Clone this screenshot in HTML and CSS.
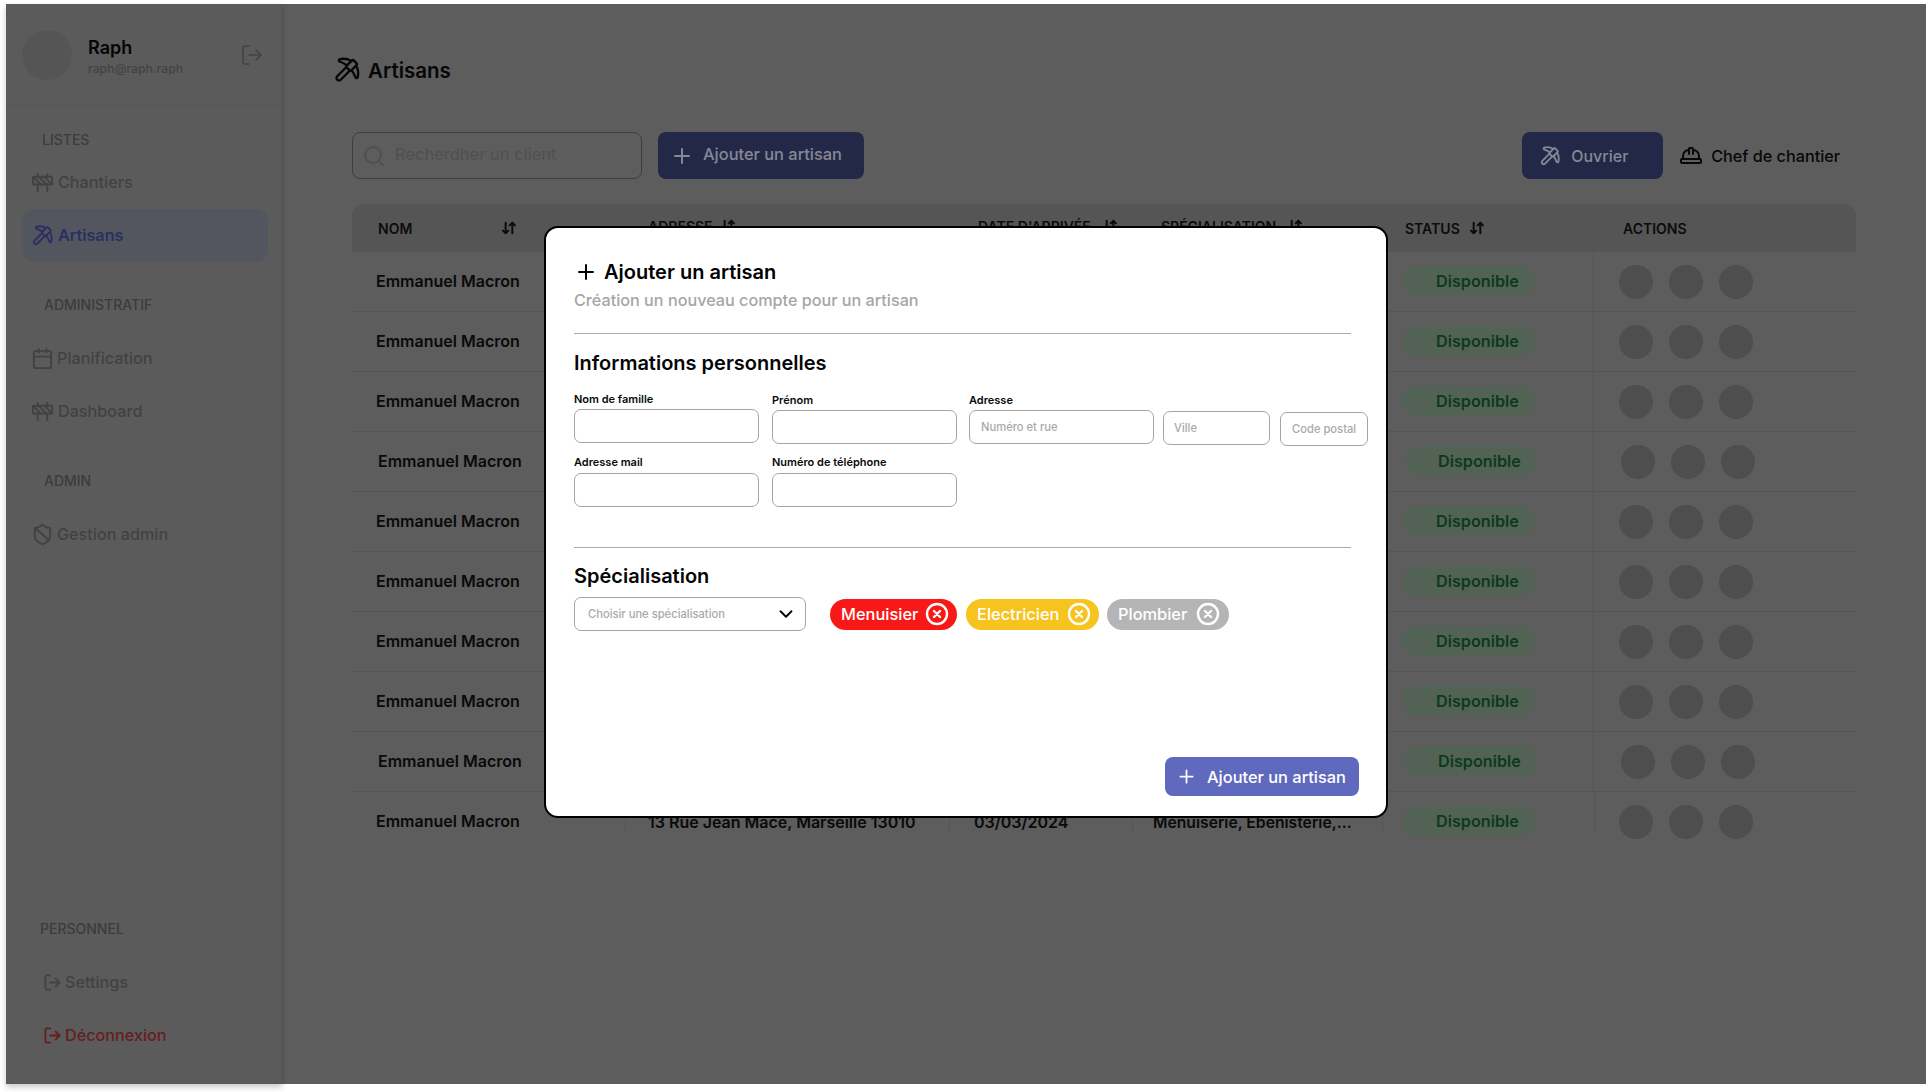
FILE: index.html
```html
<!DOCTYPE html>
<html lang="fr">

<head>
    <meta charset="UTF-8">
    <title>Artisans</title>
    <link rel="stylesheet" href="styles.css">
</head>

<body>
    <svg class="sprite" xmlns="http://www.w3.org/2000/svg">
        <symbol id="i-pick" viewBox="0 0 24 24">
            <path d="M14.531 12.469 6.619 20.38a1 1 0 1 1-3-3l7.912-7.912"></path>
            <path d="M15.686 4.314A12.5 12.5 0 0 0 5.461 2.958 1 1 0 0 0 5.58 4.71a22 22 0 0 1 6.318 3.393"></path>
            <path d="M17.7 3.7a1 1 0 0 0-1.4 0l-4.6 4.6a1 1 0 0 0 0 1.4l2.6 2.6a1 1 0 0 0 1.4 0l4.6-4.6a1 1 0 0 0 0-1.4z"></path>
            <path d="M19.686 8.314a12.501 12.501 0 0 1 1.356 10.225 1 1 0 0 1-1.751-.119 22 22 0 0 0-3.393-6.319"></path>
        </symbol>
        <symbol id="i-barrier" viewBox="0 0 24 24">
            <rect x="2" y="6" width="20" height="8" rx="1"></rect>
            <path d="M17 14v7M7 14v7M17 3v3M7 3v3M10 14 2.3 6.3M14 6l7.7 7.7M8 6l8 8"></path>
        </symbol>
        <symbol id="i-calendar" viewBox="0 0 24 24">
            <path d="M8 2v4M16 2v4M3 10h18"></path>
            <rect x="3" y="4" width="18" height="18" rx="2"></rect>
        </symbol>
        <symbol id="i-shield" viewBox="0 0 24 24">
            <path d="M20 13c0 5-3.5 7.5-7.66 8.95a1 1 0 0 1-.67-.01C7.5 20.5 4 18 4 13V6a1 1 0 0 1 1-1c2 0 4.5-1.2 6.24-2.72a1.17 1.17 0 0 1 1.52 0C14.51 3.81 17 5 19 5a1 1 0 0 1 1 1z"></path>
            <path d="m4.243 5.21 14.39 12.472"></path>
        </symbol>
        <symbol id="i-logout" viewBox="0 0 24 24">
            <path d="M9 21H5a2 2 0 0 1-2-2V5a2 2 0 0 1 2-2h4M16 17l5-5-5-5M21 12H9"></path>
        </symbol>
        <symbol id="i-hat" viewBox="0 0 24 24">
            <path d="M10 10V5a1 1 0 0 1 1-1h2a1 1 0 0 1 1 1v5M14 6a6 6 0 0 1 6 6v3M4 15v-3a6 6 0 0 1 6-6"></path>
            <rect x="2" y="15" width="20" height="4" rx="1"></rect>
        </symbol>
        <symbol id="i-sort" viewBox="0 0 24 24">
            <path d="m3 16 4 4 4-4M7 20V4M21 8l-4-4-4 4M17 4v16"></path>
        </symbol>
        <symbol id="i-plus" viewBox="0 0 24 24">
            <path d="M5 12h14M12 5v14"></path>
        </symbol>
        <symbol id="i-search" viewBox="0 0 24 24">
            <circle cx="11" cy="11" r="8"></circle>
            <path d="m21 21-4.3-4.3"></path>
        </symbol>
        <symbol id="i-chevron" viewBox="0 0 24 24">
            <path d="m6 9 6 6 6-6"></path>
        </symbol>
        <symbol id="i-close" viewBox="0 0 24 24">
            <circle cx="12" cy="12" r="10"></circle>
            <path d="m15 9-6 6M9 9l6 6"></path>
        </symbol>
    </svg>

    <div class="app">
        <aside class="sidebar">
            <div class="profile">
                <div class="avatar"></div>
                <div class="profile-text">
                    <strong>Raph</strong>
                    <small>raph@raph.raph</small>
                </div>
                <svg class="icon profile-out"><use href="#i-logout"></use></svg>
            </div>

            <h6 class="side-title side-title-first">LISTES</h6>
            <a class="nav-item"><svg class="icon"><use href="#i-barrier"></use></svg>Chantiers</a>
            <a class="nav-item active"><svg class="icon"><use href="#i-pick"></use></svg>Artisans</a>

            <h6 class="side-title">ADMINISTRATIF</h6>
            <a class="nav-item nav-tight"><svg class="icon"><use href="#i-calendar"></use></svg>Planification</a>
            <a class="nav-item"><svg class="icon"><use href="#i-barrier"></use></svg>Dashboard</a>

            <h6 class="side-title">ADMIN</h6>
            <a class="nav-item nav-tight"><svg class="icon"><use href="#i-shield"></use></svg>Gestion admin</a>

            <div class="side-bottom">
                <h6 class="side-title side-title-perso">PERSONNEL</h6>
                <a class="nav-item nav-small"><svg class="icon"><use href="#i-logout"></use></svg>Settings</a>
                <a class="nav-item nav-small danger"><svg class="icon"><use href="#i-logout"></use></svg>Déconnexion</a>
            </div>
        </aside>

        <main class="content">
            <h1 class="page-title"><svg class="icon"><use href="#i-pick"></use></svg>Artisans</h1>

            <div class="toolbar">
                <div class="search">
                    <svg class="icon"><use href="#i-search"></use></svg>
                    <span>Recherdher un client</span>
                </div>
                <button class="btn-dim" type="button"><svg class="icon"><use href="#i-plus"></use></svg><span>Ajouter un artisan</span></button>
                <div class="switcher">
                    <button class="btn-dim btn-worker" type="button"><svg class="icon"><use href="#i-pick"></use></svg>Ouvrier</button>
                    <div class="switch-off"><svg class="icon"><use href="#i-hat"></use></svg>Chef de chantier</div>
                </div>
            </div>

            <div class="table">
                <div class="thead">
                    <div class="th th-name">NOM <svg class="icon"><use href="#i-sort"></use></svg></div>
                    <div class="th th-raised th-address">ADRESSE <svg class="icon"><use href="#i-sort"></use></svg></div>
                    <div class="th th-raised th-date">DATE D'ARRIVÉE <svg class="icon"><use href="#i-sort"></use></svg></div>
                    <div class="th th-raised th-spec">SPÉCIALISATION <svg class="icon"><use href="#i-sort"></use></svg></div>
                    <div class="th th-status">STATUS <svg class="icon"><use href="#i-sort"></use></svg></div>
                    <div class="th th-actions">ACTIONS</div>
                </div>

                <!-- address, date and speciality stay empty where the modal covers them -->
                <div class="row">
                    <div class="cell cell-name">Emmanuel Macron</div>
                    <div class="cell"></div>
                    <div class="cell"></div>
                    <div class="cell"></div>
                    <div class="cell cell-status"><span class="pill">Disponible</span></div>
                    <div class="cell cell-actions"><i></i><i></i><i></i></div>
                </div>
                <div class="row">
                    <div class="cell cell-name">Emmanuel Macron</div>
                    <div class="cell"></div>
                    <div class="cell"></div>
                    <div class="cell"></div>
                    <div class="cell cell-status"><span class="pill">Disponible</span></div>
                    <div class="cell cell-actions"><i></i><i></i><i></i></div>
                </div>
                <div class="row">
                    <div class="cell cell-name">Emmanuel Macron</div>
                    <div class="cell"></div>
                    <div class="cell"></div>
                    <div class="cell"></div>
                    <div class="cell cell-status"><span class="pill">Disponible</span></div>
                    <div class="cell cell-actions"><i></i><i></i><i></i></div>
                </div>
                <div class="row row-shift">
                    <div class="cell cell-name">Emmanuel Macron</div>
                    <div class="cell"></div>
                    <div class="cell"></div>
                    <div class="cell"></div>
                    <div class="cell cell-status"><span class="pill">Disponible</span></div>
                    <div class="cell cell-actions"><i></i><i></i><i></i></div>
                </div>
                <div class="row">
                    <div class="cell cell-name">Emmanuel Macron</div>
                    <div class="cell"></div>
                    <div class="cell"></div>
                    <div class="cell"></div>
                    <div class="cell cell-status"><span class="pill">Disponible</span></div>
                    <div class="cell cell-actions"><i></i><i></i><i></i></div>
                </div>
                <div class="row">
                    <div class="cell cell-name">Emmanuel Macron</div>
                    <div class="cell"></div>
                    <div class="cell"></div>
                    <div class="cell"></div>
                    <div class="cell cell-status"><span class="pill">Disponible</span></div>
                    <div class="cell cell-actions"><i></i><i></i><i></i></div>
                </div>
                <div class="row">
                    <div class="cell cell-name">Emmanuel Macron</div>
                    <div class="cell"></div>
                    <div class="cell"></div>
                    <div class="cell"></div>
                    <div class="cell cell-status"><span class="pill">Disponible</span></div>
                    <div class="cell cell-actions"><i></i><i></i><i></i></div>
                </div>
                <div class="row">
                    <div class="cell cell-name">Emmanuel Macron</div>
                    <div class="cell"></div>
                    <div class="cell"></div>
                    <div class="cell"></div>
                    <div class="cell cell-status"><span class="pill">Disponible</span></div>
                    <div class="cell cell-actions"><i></i><i></i><i></i></div>
                </div>
                <div class="row row-shift">
                    <div class="cell cell-name">Emmanuel Macron</div>
                    <div class="cell"></div>
                    <div class="cell"></div>
                    <div class="cell"></div>
                    <div class="cell cell-status"><span class="pill">Disponible</span></div>
                    <div class="cell cell-actions"><i></i><i></i><i></i></div>
                </div>
                <div class="row row-last">
                    <div class="cell cell-name">Emmanuel Macron</div>
                    <div class="cell cell-address">13 Rue Jean Mace, Marseille 13010</div>
                    <div class="cell cell-date">03/03/2024</div>
                    <div class="cell cell-spec">Menuiserie, Ebenisterie,...</div>
                    <div class="cell cell-status"><span class="pill">Disponible</span></div>
                    <div class="cell cell-actions"><i></i><i></i><i></i></div>
                </div>
            </div>
        </main>
    </div>

    <section class="modal">
        <h2 class="modal-title"><svg class="icon"><use href="#i-plus"></use></svg>Ajouter un artisan</h2>
        <p class="modal-sub">Création un nouveau compte pour un artisan</p>
        <hr class="rule">

        <h3 class="group-title">Informations personnelles</h3>
        <div class="fields">
            <label class="field">Nom de famille<span class="input"></span></label>
            <label class="field field-down">Prénom<span class="input"></span></label>
            <div class="field field-down field-address">
                Adresse
                <div class="address-inputs">
                    <span class="input">Numéro et rue</span>
                    <span class="input input-city">Ville</span>
                    <span class="input input-zip">Code postal</span>
                </div>
            </div>
        </div>
        <div class="fields fields-second">
            <label class="field">Adresse mail<span class="input"></span></label>
            <label class="field">Numéro de téléphone<span class="input"></span></label>
        </div>
        <hr class="rule rule-second">

        <h3 class="group-title">Spécialisation</h3>
        <div class="spec-row">
            <div class="select">Choisir une spécialisation<svg class="icon"><use href="#i-chevron"></use></svg></div>
            <div class="chips">
                <span class="chip chip-red">Menuisier<svg class="icon"><use href="#i-close"></use></svg></span>
                <span class="chip chip-yellow">Electricien<svg class="icon"><use href="#i-close"></use></svg></span>
                <span class="chip chip-grey">Plombier<svg class="icon"><use href="#i-close"></use></svg></span>
            </div>
        </div>

        <div class="modal-foot">
            <button class="btn-primary" type="button"><svg class="icon"><use href="#i-plus"></use></svg>Ajouter un artisan</button>
        </div>
    </section>
</body>

</html>
```

FILE: styles.css
```css
*,
*::before,
*::after {
    box-sizing: border-box;
}

body {
    margin: 0;
    background: #fff;
    font-family: Inter, "Liberation Sans", sans-serif;
    height: 1092px;
    overflow: hidden;
    position: relative;
}

.sprite {
    display: none;
}

.icon {
    width: 24px;
    height: 24px;
    flex: none;
    fill: none;
    stroke: currentColor;
    stroke-width: 2;
    stroke-linecap: round;
    stroke-linejoin: round;
}

h1,
h2,
h3,
h6,
p {
    margin: 0;
}

/* page behind the modal, colours are already dimmed */
.app {
    display: flex;
    height: 1080px;
    margin: 4px 0 0 6px;
    background: #5d5d5d;
}

.sidebar {
    width: 276px;
    flex: none;
    display: flex;
    flex-direction: column;
    background: #5b5b5b;
    border-right: 1px solid #555;
    box-shadow: 0 3px 6px rgba(0, 0, 0, .22);
    padding-bottom: 22px;
}

.profile {
    height: 102px;
    flex: none;
    display: flex;
    align-items: center;
    padding: 0 17px 0 16px;
    border-bottom: 1px solid #555;
}

.avatar {
    width: 50px;
    height: 50px;
    border-radius: 50%;
    background: #555;
}

.profile-text {
    display: flex;
    flex-direction: column;
    margin: 5px 0 0 16px;
    flex: 1;
}

.profile-text strong {
    font-size: 18px;
    line-height: 24px;
    font-weight: 600;
    color: #050505;
}

.profile-text small {
    font-size: 12.2px;
    line-height: 18px;
    font-weight: 500;
    color: #434343;
}

.profile-out {
    color: #434343;
    stroke-width: 1.6;
}

.side-title {
    font-size: 14px;
    line-height: 20px;
    font-weight: 500;
    color: #3c3c3c;
    margin: 33px 0 17px 38px;
}

.side-title-first {
    margin: 24px 0 6px 36px;
}

.side-title-perso {
    margin-left: 34px;
    margin-top: 0;
}

.nav-item {
    height: 53px;
    margin: 0 13px 0 16px;
    padding: 0 0 1px 9px;
    display: flex;
    align-items: center;
    gap: 4px;
    border-radius: 12px;
    font-size: 16.2px;
    font-weight: 500;
    color: #424242;
}

.nav-item .icon {
    width: 23px;
    height: 23px;
}

.nav-item.active {
    background: #53565f;
    color: #2a3060;
    font-weight: 600;
}

.nav-tight {
    gap: 3px;
}

.nav-small {
    padding-left: 21px;
    gap: 3px;
}

.nav-small .icon {
    width: 19px;
    height: 19px;
    stroke-width: 2.3;
}

.nav-small.danger {
    color: #641f1f;
}

.side-bottom {
    margin-top: auto;
}

.content {
    flex: 1;
    padding: 0 70px;
    min-width: 0;
}

.page-title {
    height: 28px;
    margin: 52px 0 0 -19px;
    display: flex;
    align-items: center;
    gap: 7px;
    font-size: 20.5px;
    font-weight: 600;
    color: #070707;
}

.page-title .icon {
    width: 28px;
    height: 28px;
}

.toolbar {
    display: flex;
    align-items: center;
    margin-top: 48px;
    gap: 16px;
}

.search {
    width: 290px;
    height: 47px;
    display: flex;
    align-items: center;
    gap: 9px;
    padding-left: 9px;
    border: 1px solid #3e3e3e;
    border-radius: 8px;
    font-size: 16.5px;
    color: #505050;
}

.search span,
.btn-dim span {
    padding-bottom: 3px;
}

.btn-dim {
    height: 47px;
    width: 206px;
    display: flex;
    align-items: center;
    gap: 9px;
    padding: 0 0 0 12px;
    border: 0;
    border-radius: 8px;
    background: #232849;
    font-family: inherit;
    font-size: 16.4px;
    font-weight: 500;
    color: #868894;
}

.switcher {
    margin-left: auto;
    display: flex;
    align-items: center;
    gap: 16px;
    padding-right: 16px;
}

.btn-worker {
    width: 141px;
    padding-left: 17px;
    gap: 10px;
    font-size: 16px;
}

.btn-worker .icon {
    width: 22px;
    height: 22px;
}

.switch-off {
    display: flex;
    align-items: center;
    gap: 8px;
    font-size: 16.2px;
    font-weight: 500;
    color: #080808;
}

.table {
    margin-top: 25px;
}

.thead,
.row {
    display: grid;
    grid-template-columns: 272px 324px 183px 250px 212px 263px;
}

.thead {
    height: 48px;
    background: #555;
    border-radius: 12px 12px 0 0;
}

.th {
    display: flex;
    align-items: center;
    gap: 8px;
    padding: 0 0 0 26px;
    font-size: 14px;
    font-weight: 600;
    color: #0c0c0c;
}

.th .icon {
    width: 16px;
    height: 16px;
    stroke-width: 3;
}

.th-name .icon {
    margin-left: 81px;
}

.th-raised {
    padding-bottom: 4px;
}

.th-address {
    padding-left: 24px;
    gap: 7px;
}

.th-date {
    padding-left: 30px;
    gap: 11px;
}

.th-spec {
    padding-left: 30px;
    gap: 11px;
}

.th-status {
    padding-left: 24px;
    gap: 9px;
}

.th-actions {
    padding-left: 30px;
}

.row {
    height: 60px;
    border-bottom: 1px solid #555;
}

.row-last {
    height: 42px;
    border-bottom: 0;
}

.cell {
    display: flex;
    align-items: center;
    height: 60px;
    padding-left: 26px;
    font-size: 16px;
    font-weight: 600;
    color: #0a0a0a;
    white-space: nowrap;
    border-left: 1px solid #555;
}

.row-last .cell {
    border-left-color: transparent;
    background: linear-gradient(#555, #555) left top / 1px 42px no-repeat;
}

.cell:first-child,
.row-last .cell:first-child {
    border-left: 0;
    background: none;
}

.cell-name {
    padding: 0 0 2px 24px;
}

.cell-address {
    padding-left: 23px;
}

.cell-date {
    padding-left: 25px;
}

.cell-spec {
    padding-left: 21px;
    font-size: 15.7px;
}

.cell-status {
    padding: 0 0 2px 21px;
}

.pill {
    display: block;
    width: 132px;
    height: 30px;
    line-height: 30px;
    padding-left: 33px;
    border-radius: 15px;
    background: #526355;
    color: #0d3a1d;
    font-size: 16.2px;
}

.cell-actions {
    gap: 16px;
    padding-left: 25px;
}

.cell-actions i {
    width: 34px;
    height: 34px;
    border-radius: 50%;
    background: #4e4e4e;
}

.row-shift .cell-name {
    padding-left: 26px;
}

.row-shift .cell-status {
    padding-left: 23px;
}

.row-shift .cell-actions {
    padding-left: 27px;
}

/* modal */
.modal {
    position: absolute;
    left: 544px;
    top: 226px;
    width: 844px;
    height: 592px;
    display: flex;
    flex-direction: column;
    padding: 0 27px 20px 28px;
    background: #fff;
    border: 2px solid #000;
    border-radius: 14px;
}

.modal-title {
    margin-top: 30px;
    height: 28px;
    display: flex;
    align-items: center;
    gap: 6px;
    font-size: 20px;
    font-weight: 600;
    color: #000;
}

.modal-title .icon {
    width: 24px;
    height: 24px;
}

.modal-sub {
    margin-top: 2px;
    font-size: 16.2px;
    line-height: 24px;
    font-weight: 500;
    color: #a6a6a6;
}

.rule {
    width: 777px;
    height: 1px;
    margin: 21px 0 0;
    border: 0;
    background: #ababab;
}

.group-title {
    margin-top: 16px;
    font-size: 20px;
    line-height: 26px;
    font-weight: 600;
    color: #050505;
}

.fields {
    display: flex;
    gap: 13px;
    margin-top: 15px;
}

.fields-second {
    margin-top: 8px;
}

.field {
    display: block;
    width: 185px;
    font-size: 11px;
    line-height: 16px;
    font-weight: 600;
    color: #0a0a0a;
}

.field-down {
    margin-top: 1px;
}

.field-address {
    width: auto;
    margin-left: -1px;
}

.input {
    display: flex;
    align-items: center;
    width: 185px;
    height: 34px;
    margin-top: 2px;
    padding-left: 11px;
    border: 1px solid #a5a5a5;
    border-radius: 7px;
    font-size: 11.2px;
    font-weight: 500;
    color: #a9a9a9;
}

.fields-second .input {
    margin-top: 3px;
}

.address-inputs {
    display: flex;
    gap: 9px;
}

.input-city {
    width: 107px;
    margin-top: 3px;
    padding-left: 10px;
}

.input-zip {
    width: 88px;
    margin-top: 4px;
    margin-left: 1px;
    white-space: nowrap;
}

.rule-second {
    margin-top: 40px;
}

.rule-second + .group-title {
    margin-top: 15px;
}

.spec-row {
    display: flex;
    align-items: center;
    margin-top: 8px;
}

.select {
    width: 232px;
    height: 34px;
    display: flex;
    align-items: center;
    justify-content: space-between;
    padding: 0 8px 0 13px;
    border: 1px solid #a5a5a5;
    border-radius: 7px;
    font-size: 11.2px;
    font-weight: 500;
    color: #a9a9a9;
}

.select .icon {
    color: #000;
    width: 22px;
    height: 22px;
}

.chips {
    display: flex;
    gap: 9px;
    margin-left: 24px;
}

.chip {
    height: 31px;
    display: flex;
    align-items: center;
    justify-content: space-between;
    padding: 0 8px 0 11px;
    border-radius: 16px;
    font-size: 16.4px;
    font-weight: 500;
    color: #fff;
}

.chip .icon {
    width: 24px;
    height: 24px;
    stroke-width: 2.4;
}

.chip-red {
    width: 127px;
    background: #f91818;
}

.chip-yellow {
    width: 133px;
    background: #f7c31e;
}

.chip-grey {
    width: 122px;
    margin-left: -1px;
    padding-right: 9px;
    background: #b5b5b5;
}

.modal-foot {
    margin-top: auto;
    display: flex;
    justify-content: flex-end;
}

.btn-primary {
    width: 194px;
    height: 39px;
    display: flex;
    align-items: center;
    gap: 10px;
    padding: 0 0 0 11px;
    border: 0;
    border-radius: 8px;
    background: #5f69bd;
    font-family: inherit;
    font-size: 16.4px;
    font-weight: 500;
    color: #fff;
}

.btn-primary .icon {
    width: 21px;
    height: 21px;
}
```
